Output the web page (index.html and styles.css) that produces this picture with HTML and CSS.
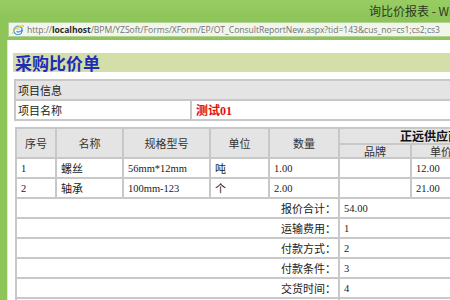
FILE: index.html
```html
<!DOCTYPE html>
<html>
<head>
<meta charset="utf-8">
<link rel="stylesheet" href="styles.css">
</head>
<body>
<div class="window">
  <div class="titlebar">
    <svg class="ie" width="13" height="13" viewBox="0 0 13 13">
      <defs>
        <radialGradient id="g1" cx="40%" cy="35%" r="70%">
          <stop offset="0" stop-color="#9fe0ff"/>
          <stop offset="1" stop-color="#1b78c8"/>
        </radialGradient>
      </defs>
      <circle cx="6.5" cy="6.8" r="5.2" fill="url(#g1)"/>
      <path d="M3.4 6.6 H9.6 M9.4 8.6 A3.1 3.1 0 1 1 9.6 6.2" stroke="#fff" stroke-width="1.4" fill="none"/>
      <path d="M1 10.5 C0 8 6 2.5 11.5 1.5 C12.5 1.4 12.6 2.5 11.2 3.8" stroke="#f2c230" stroke-width="1.1" fill="none"/>
    </svg>
    <span class="title">询比价报表 - Windows Internet Explorer</span>
  </div>
  <div class="addressbar">
    <div class="addrbox">
      <svg class="ie small" width="12" height="12" viewBox="0 0 13 13">
        <circle cx="6.5" cy="6.8" r="5.2" fill="url(#g1)"/>
        <path d="M3.4 6.6 H9.6 M9.4 8.6 A3.1 3.1 0 1 1 9.6 6.2" stroke="#fff" stroke-width="1.4" fill="none"/>
        <path d="M1 10.5 C0 8 6 2.5 11.5 1.5 C12.5 1.4 12.6 2.5 11.2 3.8" stroke="#f2c230" stroke-width="1.1" fill="none"/>
      </svg>
      <span class="url"><span class="proto">http://</span><b>localhost</b>/BPM/YZSoft/Forms/XForm/EP/OT_ConsultReportNew.aspx?tid=143&amp;cus_no=cs1;cs2;cs3</span>
    </div>
  </div>
  <div class="frame">
    <div class="page">
      <div class="heading">采购比价单</div>

      <table class="info">
        <colgroup><col class="c-label"><col class="c-value"></colgroup>
        <tr class="gray"><td colspan="2" class="cn">项目信息</td></tr>
        <tr><td class="cn">项目名称</td><td class="red">测试01</td></tr>
      </table>

      <table class="grid">
        <colgroup>
          <col class="w40"><col class="w67"><col class="w87"><col class="w59"><col class="w70"><col class="w72"><col class="w60"><col class="w50">
        </colgroup>
        <tr class="head h1">
          <th rowspan="2">序号</th>
          <th rowspan="2">名称</th>
          <th rowspan="2">规格型号</th>
          <th rowspan="2">单位</th>
          <th rowspan="2">数量</th>
          <th colspan="3" class="vendor">正远供应商</th>
        </tr>
        <tr class="head h2">
          <th>品牌</th><th>单价</th><th>金额</th>
        </tr>
        <tr class="row">
          <td class="num">1</td><td class="cn">螺丝</td><td class="num">56mm*12mm</td><td class="cn">吨</td><td class="num">1.00</td><td></td><td class="num">12.00</td><td class="num">12.00</td>
        </tr>
        <tr class="row">
          <td class="num">2</td><td class="cn">轴承</td><td class="num">100mm-123</td><td class="cn">个</td><td class="num">2.00</td><td></td><td class="num">21.00</td><td class="num">42.00</td>
        </tr>
        <tr class="row"><td colspan="5" class="label">报价合计：</td><td colspan="3" class="num">54.00</td></tr>
        <tr class="row"><td colspan="5" class="label">运输费用：</td><td colspan="3" class="num">1</td></tr>
        <tr class="row"><td colspan="5" class="label">付款方式：</td><td colspan="3" class="num">2</td></tr>
        <tr class="row"><td colspan="5" class="label">付款条件：</td><td colspan="3" class="num">3</td></tr>
        <tr class="row"><td colspan="5" class="label">交货时间：</td><td colspan="3" class="num">4</td></tr>
        <tr class="row"><td colspan="5" class="label">备注：</td><td colspan="3" class="num"></td></tr>
      </table>
    </div>
  </div>
</div>
</body>
</html>
```

FILE: styles.css
```css
html, body {
  margin: 0;
  padding: 0;
  background: #ffffff;
}

.window {
  width: 450px;
  height: 300px;
  overflow: hidden;
  background: #8dc559;
  font-family: "Noto Sans CJK SC", sans-serif;
}

.titlebar {
  height: 21px;
  display: flex;
  align-items: center;
  padding-left: 7px;
  white-space: nowrap;
  background: linear-gradient(#98cd63, #8cc457);
}

.title {
  margin-left: 362px;
  font-size: 12px;
  color: #2e3a22;
}

.addressbar {
  height: 19px;
  padding: 1px 0 0 8px;
  box-sizing: border-box;
}

.addrbox {
  width: 600px;
  height: 15px;
  display: flex;
  align-items: center;
  background: #f1f6ea;
  border: 1px solid #b5cf98;
  border-right: none;
  box-sizing: border-box;
  padding-left: 3px;
  white-space: nowrap;
}

.ie.small {
  margin-right: 3px;
}

.url {
  font-family: "Open Sans", sans-serif;
  font-size: 8.6px;
  letter-spacing: -0.04px;
  color: #727272;
}

.url b {
  color: #2a2a2a;
}

.frame {
  padding-left: 7px;
  height: 260px;
}

.page {
  width: 700px;
  height: 100%;
  background: #ffffff;
  border-left: 1px solid #dfe8d3;
  padding: 13px 0 0 5px;
  box-sizing: border-box;
}

.heading {
  width: 640px;
  height: 19px;
  line-height: 19px;
  background: #d3dea9;
  color: #1e2db8;
  font-weight: bold;
  font-size: 17px;
  padding-left: 2px;
}

table {
  border-collapse: collapse;
  table-layout: fixed;
}

td, th {
  border: 2px solid #c8c8c8;
  padding: 0 0 0 4px;
  overflow: hidden;
  white-space: nowrap;
}

.info {
  margin-top: 7px;
  margin-left: 1px;
  width: 640px;
}

.info .c-label { width: 176px; }

.info td {
  height: 18px;
  font-size: 11px;
  color: #222;
  padding-left: 2px;
}

.info tr.gray td {
  background: #e4e4e4;
}

.info td.red {
  color: #e01010;
  font-weight: bold;
  font-size: 12px;
  font-family: "Liberation Serif", "Noto Sans CJK SC", serif;
  padding-left: 4px;
}

.grid {
  margin-top: 6px;
  margin-left: 2px;
  width: 505px;
}

.w40 { width: 40px; }
.w67 { width: 67px; }
.w87 { width: 87px; }
.w59 { width: 59px; }
.w70 { width: 70px; }
.w72 { width: 72px; }
.w60 { width: 60px; }
.w50 { width: 50px; }

.head th {
  background: #e4e4e4;
  font-weight: normal;
  font-size: 11px;
  color: #333;
  text-align: center;
  padding: 0;
}

.h1 { height: 16px; }
.h2 { height: 13px; }

.h2 th {
  line-height: 12px;
}

.head th.vendor {
  font-weight: bold;
  font-size: 12px;
  color: #111;
  line-height: 14px;
}

.row td {
  height: 18px;
  color: #222;
}

.num {
  font-family: "Liberation Serif", serif;
  font-size: 10.5px;
}

.cn {
  font-size: 11px;
}

.label {
  text-align: right;
  font-size: 11px;
  padding: 0 2px 0 0;
}
```
